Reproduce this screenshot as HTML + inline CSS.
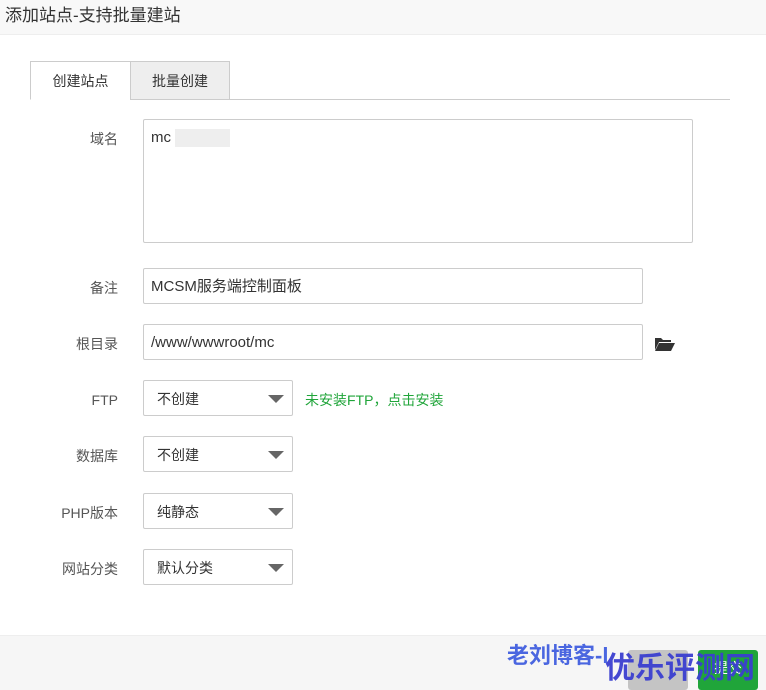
<!DOCTYPE html><html><head><meta charset="utf-8"><style>
*{box-sizing:border-box;margin:0;padding:0}
body{width:766px;height:690px;position:relative;overflow:hidden;background:#fff;font-family:"Liberation Sans","Noto Sans CJK SC",sans-serif;color:#555;font-size:14px}
.a{position:absolute}
.hd{left:0;top:0;width:766px;height:35px;background:#f8f8f8;border-bottom:1px solid #eee;font-size:17px;color:#333;padding:1px 0 0 5px}
.tab{top:61px;height:39px;border:1px solid #ccc;line-height:38px;text-align:center;color:#333}
.lbl{width:118px;text-align:right;left:0;line-height:36px}
.in{border:1px solid #ccc;border-radius:2px;padding-left:7px;line-height:36px;color:#333;font-size:15px}
.sel{left:143px;width:150px;height:36px;border:1px solid #ccc;border-radius:2px;padding-left:13px;line-height:36px;color:#333}
.sel:after{content:"";position:absolute;right:8px;top:14px;border-left:8px solid transparent;border-right:8px solid transparent;border-top:8px solid #666}
</style></head><body>
<div class="a hd">添加站点-支持批量建站</div>
<div class="a" style="left:30px;top:99px;width:700px;height:1px;background:#ccc"></div>
<div class="a tab" style="left:30px;width:101px;background:#fff;border-bottom-color:#fff">创建站点</div>
<div class="a tab" style="left:130px;width:100px;background:#eee">批量创建</div>
<div class="a lbl" style="top:121px">域名</div>
<div class="a in" style="left:143px;top:119px;width:550px;height:124px;line-height:36px">mc<span style="display:inline-block;width:55px;height:18px;background:#eee;vertical-align:middle;margin-left:4px"></span></div>
<div class="a lbl" style="top:270px">备注</div>
<div class="a in" style="left:143px;top:268px;width:500px;height:36px">MCSM服务端控制面板</div>
<div class="a lbl" style="top:326px">根目录</div>
<div class="a in" style="left:143px;top:324px;width:500px;height:36px">/www/wwwroot/mc</div>
<svg class="a" style="left:655px;top:336px" width="20" height="15" viewBox="0 0 20 15"><path d="M0 2h6l2 2h8v2H4L0 14z" fill="#333"/><path d="M4 7h16l-4 8H0z" fill="#333"/></svg>
<div class="a lbl" style="top:382px">FTP</div>
<div class="a sel" style="top:380px">不创建</div>
<div class="a" style="left:305px;top:390px;color:#20a53a">未安装FTP，点击安装</div>
<div class="a lbl" style="top:438px">数据库</div>
<div class="a sel" style="top:436px">不创建</div>
<div class="a lbl" style="top:495px">PHP版本</div>
<div class="a sel" style="top:493px">纯静态</div>
<div class="a lbl" style="top:551px">网站分类</div>
<div class="a sel" style="top:549px">默认分类</div>
<div class="a" style="left:0;top:635px;width:766px;height:55px;background:#f6f6f6;border-top:1px solid #eee"></div>
<div class="a" style="left:628px;top:650px;width:60px;height:40px;background:#c4c4c4;border-radius:3px"></div>
<div class="a" style="left:698px;top:650px;width:60px;height:40px;background:#20a53a;border-radius:3px;color:#fff;text-align:center;line-height:36px">提交</div>
<div class="a" style="left:507px;top:638px;font-size:22px;font-weight:bold;color:#4a66e0">老刘博客-l</div>
<div class="a" style="left:605px;top:643px;font-size:30px;font-weight:bold;color:#3b3fd0;opacity:.95">优乐评测网</div>
</body></html>
